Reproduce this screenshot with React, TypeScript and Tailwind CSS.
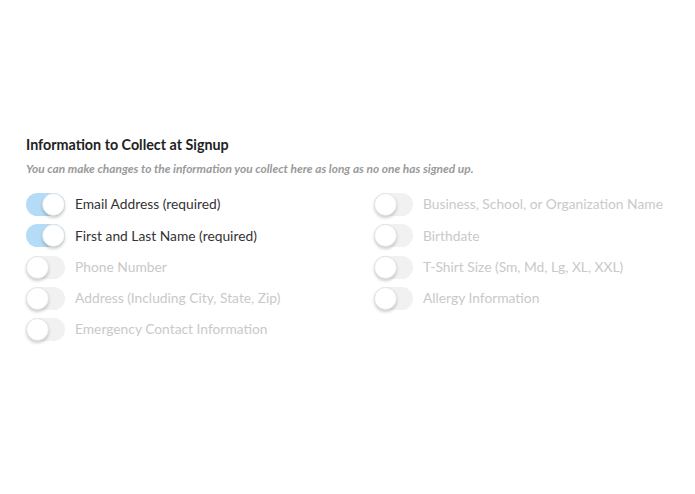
import React from "react";

type Field = { label: string; on: boolean };

const left: Field[] = [
  { label: "Email Address (required)", on: true },
  { label: "First and Last Name (required)", on: true },
  { label: "Phone Number", on: false },
  { label: "Address (Including City, State, Zip)", on: false },
  { label: "Emergency Contact Information", on: false },
];

const right: Field[] = [
  { label: "Business, School, or Organization Name", on: false },
  { label: "Birthdate", on: false },
  { label: "T-Shirt Size (Sm, Md, Lg, XL, XXL)", on: false },
  { label: "Allergy Information", on: false },
];

function Toggle({ on }: { on: boolean }) {
  return (
    <div
      className={`relative w-[39px] h-[23px] rounded-full shrink-0 flex items-center ${
        on ? "bg-[#b5dcf6] justify-end" : "bg-[#f1f1f1] justify-start"
      }`}
    >
      <div className="w-[23px] h-[23px] rounded-full bg-white border border-[#e4e4e4] shadow-[0_2px_3px_rgba(0,0,0,0.18)]" />
    </div>
  );
}

function Row({ f }: { f: Field }) {
  return (
    <div className="flex items-center h-[31.25px]">
      <Toggle on={f.on} />
      <span
        className={`ml-[10px] text-[13.8px] ${f.on ? "text-[#333]" : "text-[#c9c9c9]"}`}
      >
        {f.label}
      </span>
    </div>
  );
}

export default function App() {
  return (
    <div
      className="w-[695px] h-[494px] bg-white pl-[26px] pt-[134px]"
      style={{ fontFamily: "Lato, 'Open Sans', sans-serif" }}
    >
      <h2 className="text-[14.3px] font-bold text-[#222] leading-[22px]">
        Information to Collect at Signup
      </h2>
      <p className="mt-[4px] text-[11.9px] italic font-bold text-[#9a9a9a] leading-[18px]">
        You can make changes to the information you collect here as long as no one has signed up.
      </p>
      <div className="mt-[11px] flex">
        <div className="w-[348px] flex flex-col">
          {left.map(f => (
            <Row key={f.label} f={f} />
          ))}
        </div>
        <div className="flex flex-col">
          {right.map(f => (
            <Row key={f.label} f={f} />
          ))}
        </div>
      </div>
    </div>
  );
}
